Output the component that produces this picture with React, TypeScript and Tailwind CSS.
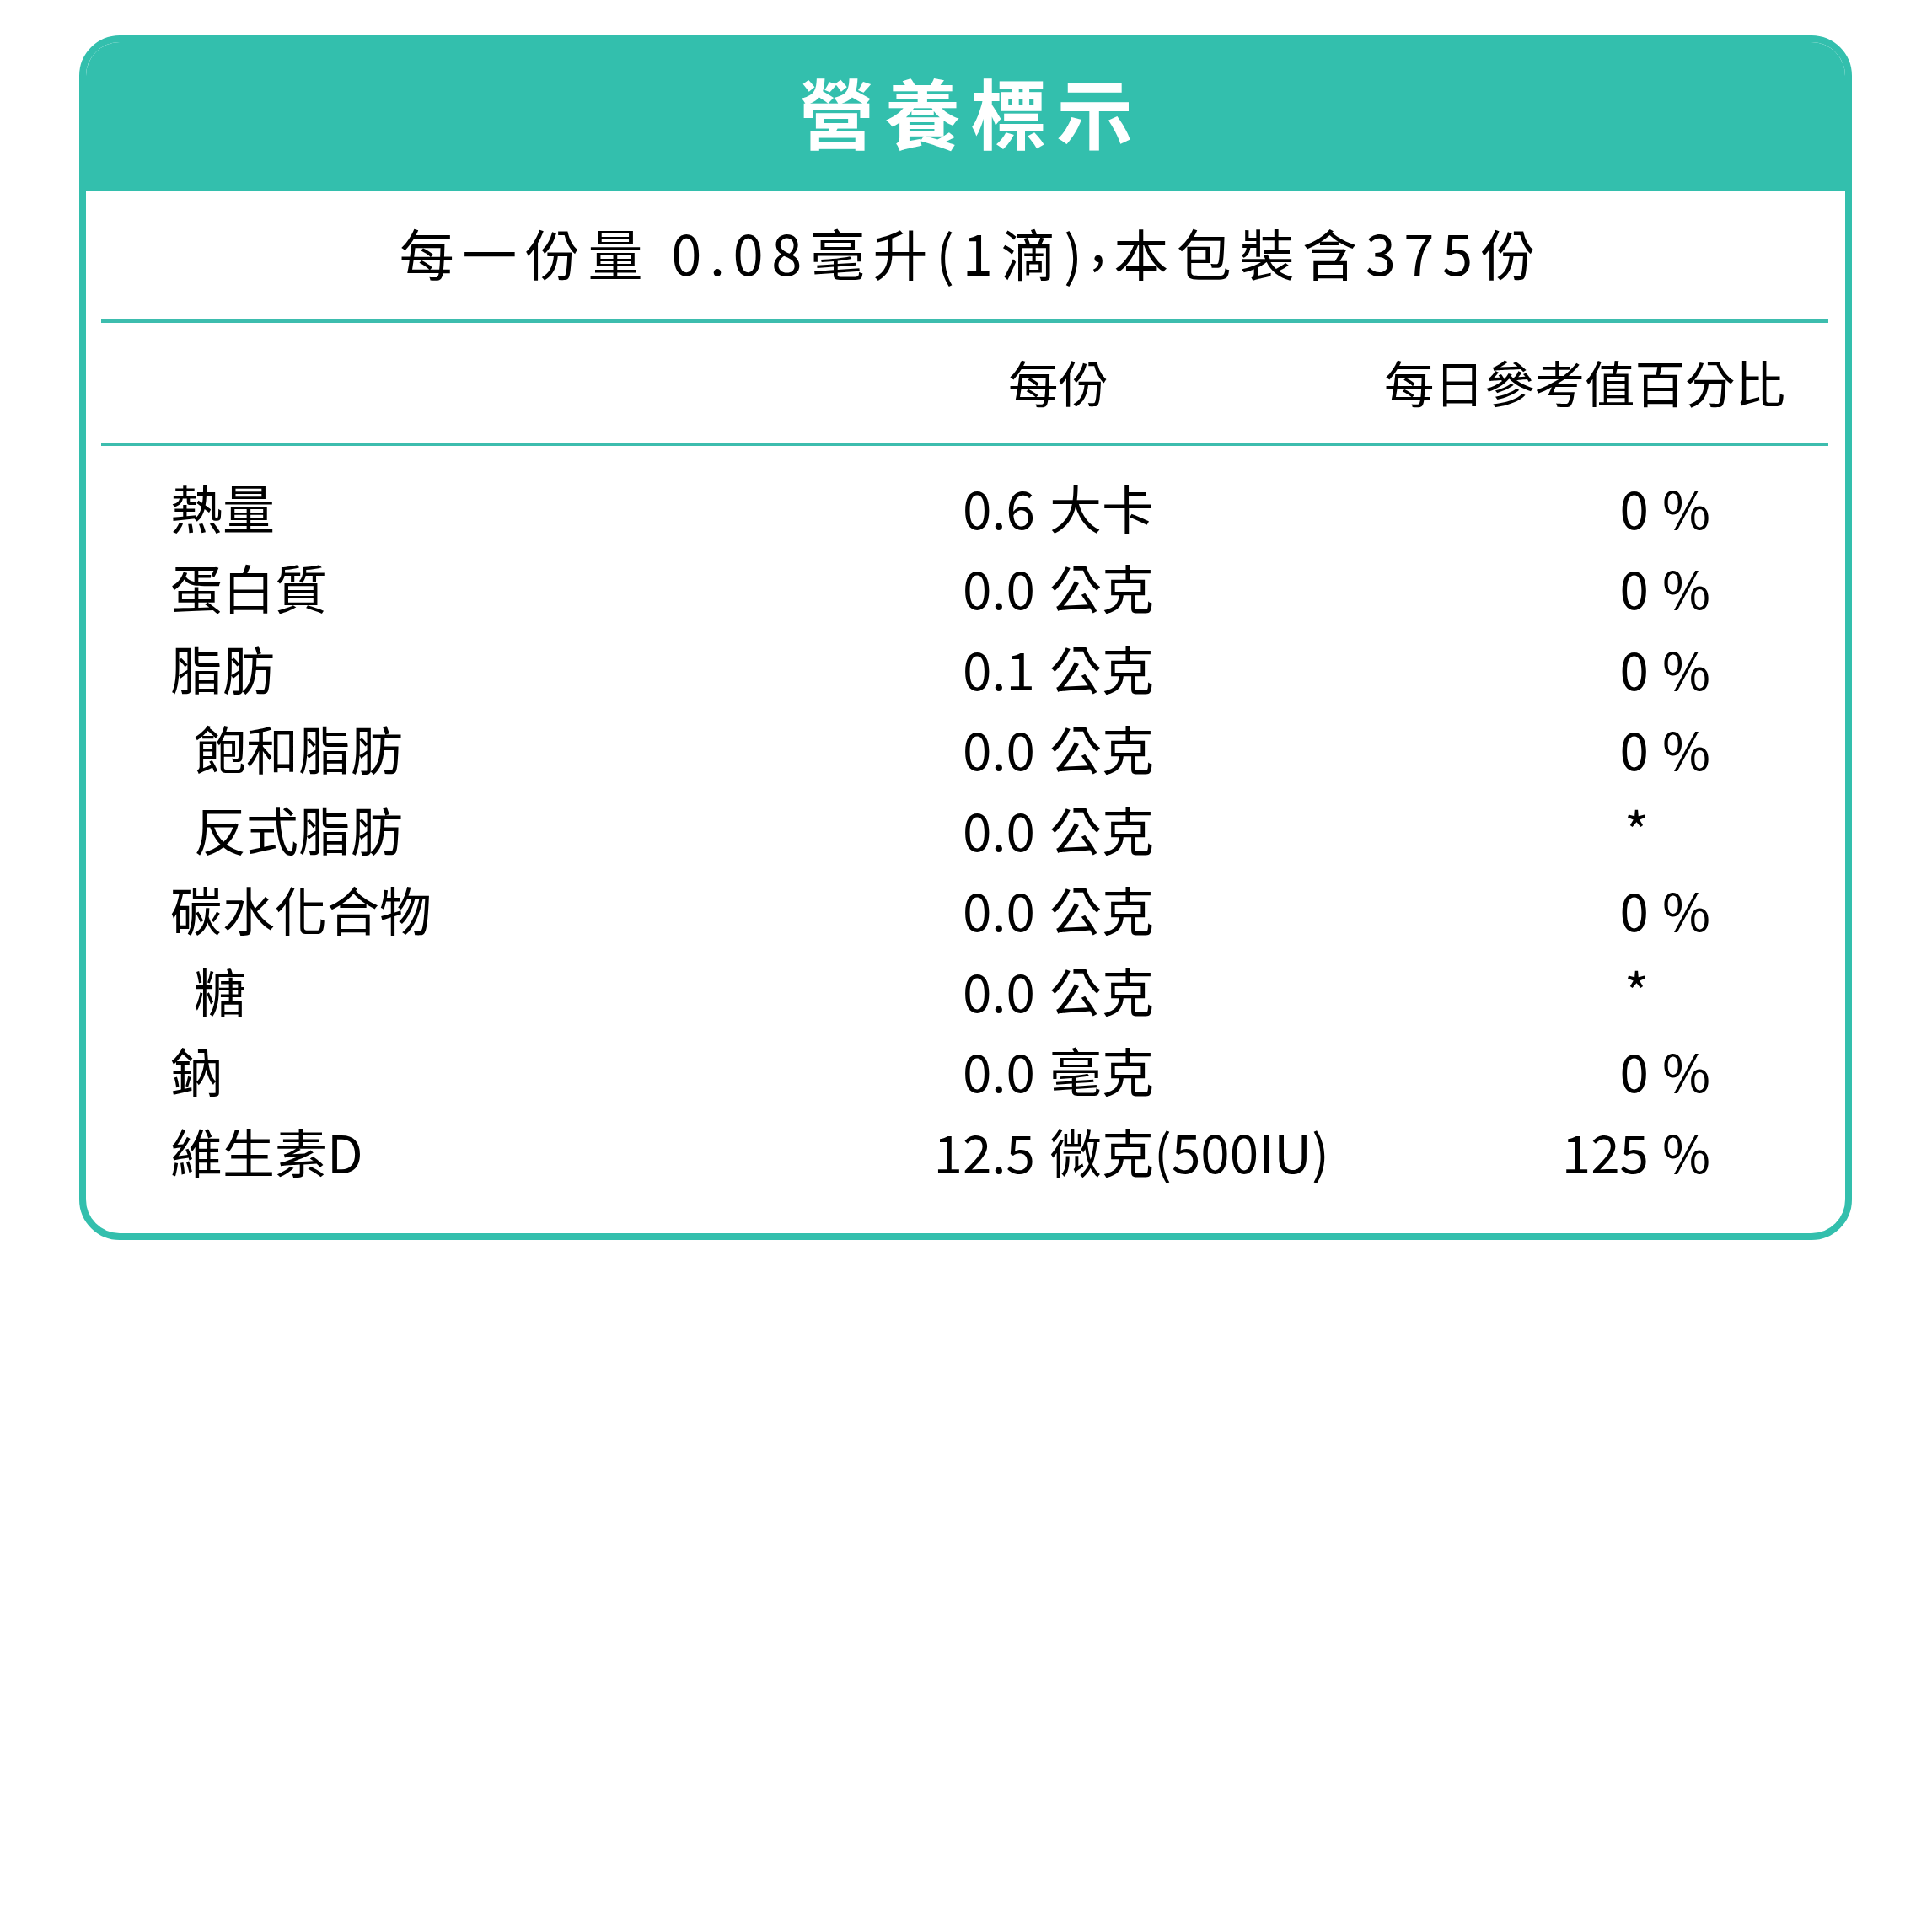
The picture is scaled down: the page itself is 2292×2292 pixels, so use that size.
import React from "react";

type Row = {
  name: string;
  indent?: boolean;
  num: string;
  unit: string;
  pct: string;
  percent: boolean;
};

const rows: Row[] = [
  { name: "熱量", num: "0.6", unit: "大卡", pct: "0", percent: true },
  { name: "蛋白質", num: "0.0", unit: "公克", pct: "0", percent: true },
  { name: "脂肪", num: "0.1", unit: "公克", pct: "0", percent: true },
  { name: "飽和脂肪", indent: true, num: "0.0", unit: "公克", pct: "0", percent: true },
  { name: "反式脂肪", indent: true, num: "0.0", unit: "公克", pct: "*", percent: false },
  { name: "碳水化合物", num: "0.0", unit: "公克", pct: "0", percent: true },
  { name: "糖", indent: true, num: "0.0", unit: "公克", pct: "*", percent: false },
  { name: "鈉", num: "0.0", unit: "毫克", pct: "0", percent: true },
  { name: "維生素D", num: "12.5", unit: "微克(500IU)", pct: "125", percent: true },
];

export default function App() {
  return (
    <div
      className="w-[2292px] h-[2292px] bg-white pt-[42px] pl-[94px] text-black"
      style={{ fontFamily: '"Noto Sans CJK TC", "Noto Sans", sans-serif' }}
    >
      <div className="w-[2103px] border-[8px] border-[#33bfad] rounded-[48px] overflow-hidden bg-white">
        {/* Header */}
        <div className="h-[176px] pb-[14px] bg-[#33bfad] flex items-center justify-center">
          <span className="text-[90px] font-bold text-white tracking-[12px] leading-none pl-[12px]">
            營養標示
          </span>
        </div>

        {/* Serving size */}
        <div className="h-[153px] pb-[22px] flex items-center justify-center">
          <span className="text-[65px] tracking-[9.6px] leading-none whitespace-nowrap pl-[14px]">
            每一份量 0.08毫升(1滴)
            <span className="align-[16px]">,</span>
            本包裝含375份
          </span>
        </div>

        <div className="h-[4px] bg-[#3dbdae] ml-[18px] mr-[20px]" />

        {/* Column headers */}
        <div className="h-[142px] pb-[2px] flex items-center pl-[1094px] text-[59.5px] leading-none">
          <span className="w-[446px]">每份</span>
          <span>每日參考值百分比</span>
        </div>

        <div className="h-[4px] bg-[#3dbdae] ml-[18px] mr-[20px]" />

        {/* Rows */}
        <div className="pt-[24px] pb-[50px]">
          {rows.map((r) => (
            <div
              key={r.name}
              className="h-[95.5px] flex items-center pl-[100px] text-[62px] leading-none whitespace-nowrap"
            >
              <div className={`w-[826px] ${r.indent ? "pl-[28px]" : ""}`}>{r.name}</div>
              <div className="w-[200px] text-right">{r.num}</div>
              <div className="w-[500px] pl-[17px]">{r.unit}</div>
              <div className="w-[228px] text-right">{r.pct}</div>
              <div className="pl-[16px]">{r.percent ? "%" : ""}</div>
            </div>
          ))}
        </div>
      </div>
    </div>
  );
}
